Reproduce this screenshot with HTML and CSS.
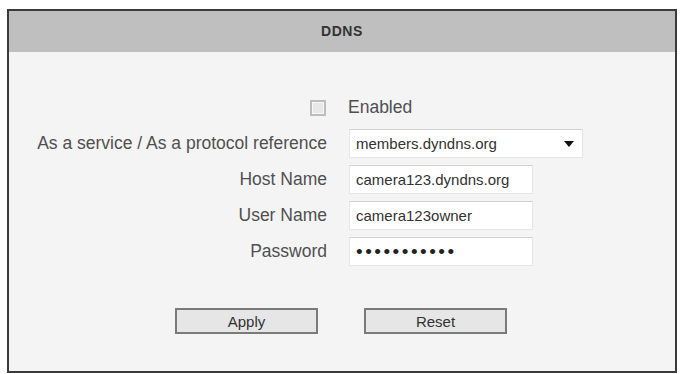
FILE: index.html
```html
<!DOCTYPE html>
<html lang="en">
<head>
    <meta charset="UTF-8">
    <meta name="viewport" content="width=device-width, initial-scale=1.0">
    <title>DDNS</title>
    <link rel="stylesheet" href="styles.css">
</head>
<body>
    <div class="panel">
        <div class="panel-header">DDNS</div>
        <form class="form" onsubmit="return false">
            <div class="form-grid">
                <div class="label"></div>
                <div class="control check-row">
                    <input type="checkbox" id="enabled" class="check">
                    <label for="enabled">Enabled</label>
                </div>

                <label class="label" for="service">As a service / As a protocol reference</label>
                <div class="control">
                    <div class="select-wrap">
                        <select id="service" class="select">
                            <option>members.dyndns.org</option>
                        </select>
                    </div>
                </div>

                <label class="label" for="host">Host Name</label>
                <div class="control">
                    <input type="text" id="host" class="field" value="camera123.dyndns.org">
                </div>

                <label class="label" for="user">User Name</label>
                <div class="control">
                    <input type="text" id="user" class="field" value="camera123owner">
                </div>

                <label class="label" for="pass">Password</label>
                <div class="control">
                    <input type="password" id="pass" class="field pass" value="secretpass1">
                </div>
            </div>

            <div class="buttons">
                <button type="submit" class="btn">Apply</button>
                <button type="reset" class="btn">Reset</button>
            </div>
        </form>
    </div>
</body>
</html>
```

FILE: styles.css
```css
* {
    margin: 0;
    padding: 0;
    box-sizing: border-box;
    font-family: "Liberation Sans", Arial, sans-serif;
}
body {
    background-color: #ffffff;
    padding: 9px 7px 0 7px;
}
.panel {
    border: 2px solid #3a3a3a;
    background-color: #f4f4f4;
    height: 364px;
}
.panel-header {
    background-color: #bfbfbf;
    height: 41px;
    line-height: 41px;
    text-align: center;
    font-size: 14px;
    font-weight: bold;
    color: #333;
    letter-spacing: 0.6px;
}
.form {
    padding-top: 41px;
}
.form-grid {
    display: grid;
    grid-template-columns: 318px 1fr;
    column-gap: 22px;
    row-gap: 7px;
    grid-auto-rows: 29px;
}
.label {
    display: flex;
    align-items: center;
    justify-content: flex-end;
    font-size: 17.5px;
    color: #505050;
    white-space: nowrap;
}
.control {
    display: flex;
    align-items: center;
}
.check-row {
    margin-left: -39px;
    gap: 22px;
    font-size: 17.5px;
    color: #505050;
}
.check {
    appearance: none;
    width: 16px;
    height: 16px;
    border: 2px solid #bcbcbc;
    background: #e8e8e8;
    box-shadow: inset 0 0 0 1px #f6f6f6;
}
.select-wrap {
    position: relative;
    width: 234px;
    height: 29px;
}
.select-wrap::after {
    content: "";
    position: absolute;
    right: 9px;
    top: 12px;
    border-left: 5px solid transparent;
    border-right: 5px solid transparent;
    border-top: 6px solid #111;
    pointer-events: none;
}
.select {
    appearance: none;
    width: 100%;
    height: 100%;
    background: #ffffff;
    border: 1px solid #e6e6e6;
    border-top-color: #d2d2d2;
    padding-left: 6px;
    font-size: 15px;
    color: #333;
}
.field {
    width: 184px;
    height: 29px;
    background: #ffffff;
    border: 1px solid #e6e6e6;
    border-top-color: #d2d2d2;
    padding-left: 6px;
    font-size: 15px;
    color: #333;
}
.pass {
    letter-spacing: 2.5px;
    font-size: 19px;
    color: #222;
}
.buttons {
    display: flex;
    justify-content: center;
    gap: 46px;
    margin-top: 42px;
    padding-right: 2px;
}
.btn {
    width: 143px;
    height: 26px;
    background: #e6e6e6;
    border: 2px solid #7a7a7a;
    font-size: 15px;
    color: #333;
}
```
